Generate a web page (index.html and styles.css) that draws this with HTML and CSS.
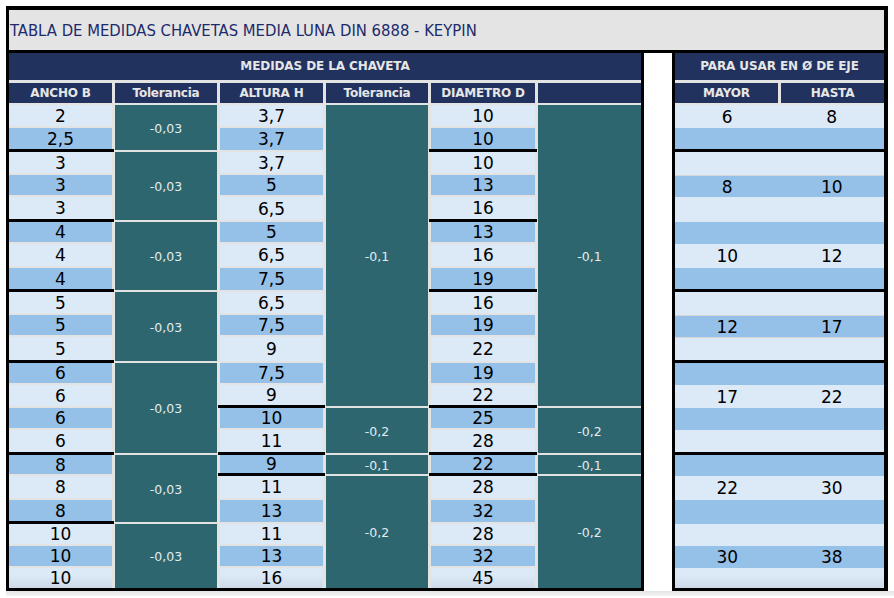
FILE: index.html
```html
<!DOCTYPE html>
<html lang="es">
<head>
<meta charset="utf-8">
<title>Tabla de medidas chavetas media luna DIN 6888</title>
<link rel="stylesheet" href="styles.css">
</head>
<body>
<div class="sheet">
  <div class="title">TABLA DE MEDIDAS CHAVETAS MEDIA LUNA DIN 6888 - KEYPIN</div>
  <div class="tables">
    <section class="tbl left">
      <div class="h1">MEDIDAS DE LA CHAVETA</div>
      <div class="h2 h2-left">
        <div>ANCHO B</div><div>Tolerancia</div><div>ALTURA H</div><div>Tolerancia</div><div>DIAMETRO D</div><div></div>
      </div>
      <div class="data">
        <div class="col">
          <div class="c l">2</div><div class="c b sep">2,5</div>
          <div class="c l">3</div><div class="c b">3</div><div class="c l sep">3</div>
          <div class="c b">4</div><div class="c l">4</div><div class="c b sep">4</div>
          <div class="c l">5</div><div class="c b">5</div><div class="c l sep">5</div>
          <div class="c b">6</div><div class="c l">6</div><div class="c b">6</div><div class="c l sep">6</div>
          <div class="c b">8</div><div class="c l">8</div><div class="c b sep">8</div>
          <div class="c l">10</div><div class="c b">10</div><div class="c l">10</div>
        </div>
        <div class="col">
          <div class="t s2">-0,03</div>
          <div class="t s3">-0,03</div>
          <div class="t s3">-0,03</div>
          <div class="t s3">-0,03</div>
          <div class="t s4">-0,03</div>
          <div class="t s3">-0,03</div>
          <div class="t s3">-0,03</div>
        </div>
        <div class="col">
          <div class="c l">3,7</div><div class="c b">3,7</div>
          <div class="c l">3,7</div><div class="c b">5</div><div class="c l">6,5</div>
          <div class="c b">5</div><div class="c l">6,5</div><div class="c b">7,5</div>
          <div class="c l">6,5</div><div class="c b">7,5</div><div class="c l">9</div>
          <div class="c b">7,5</div><div class="c l sep">9</div><div class="c b">10</div><div class="c l sep">11</div>
          <div class="c b sep">9</div><div class="c l">11</div><div class="c b">13</div>
          <div class="c l">11</div><div class="c b">13</div><div class="c l">16</div>
        </div>
        <div class="col">
          <div class="t s13">-0,1</div>
          <div class="t s2">-0,2</div>
          <div class="t">-0,1</div>
          <div class="t s5">-0,2</div>
        </div>
        <div class="col">
          <div class="c l">10</div><div class="c b sep">10</div>
          <div class="c l">10</div><div class="c b">13</div><div class="c l sep">16</div>
          <div class="c b">13</div><div class="c l">16</div><div class="c b sep">19</div>
          <div class="c l">16</div><div class="c b">19</div><div class="c l">22</div>
          <div class="c b">19</div><div class="c l sep">22</div><div class="c b">25</div><div class="c l sep">28</div>
          <div class="c b sep">22</div><div class="c l">28</div><div class="c b">32</div>
          <div class="c l">28</div><div class="c b">32</div><div class="c l">45</div>
        </div>
        <div class="col">
          <div class="t s13">-0,1</div>
          <div class="t s2">-0,2</div>
          <div class="t">-0,1</div>
          <div class="t s5">-0,2</div>
        </div>
      </div>
    </section>
    <section class="tbl right">
      <div class="h1">PARA USAR EN Ø DE EJE</div>
      <div class="h2 h2-right">
        <div>MAYOR</div><div>HASTA</div>
      </div>
      <div class="rdata">
        <div class="r l"><span>6</span><span>8</span></div>
        <div class="r b rsep"><span></span><span></span></div>
        <div class="r l"><span></span><span></span></div>
        <div class="r b gl"><span>8</span><span>10</span></div>
        <div class="r l"><span></span><span></span></div>
        <div class="r b"><span></span><span></span></div>
        <div class="r l"><span>10</span><span>12</span></div>
        <div class="r b rsep"><span></span><span></span></div>
        <div class="r l"><span></span><span></span></div>
        <div class="r b gl"><span>12</span><span>17</span></div>
        <div class="r l gl rsep"><span></span><span></span></div>
        <div class="r b"><span></span><span></span></div>
        <div class="r l"><span>17</span><span>22</span></div>
        <div class="r b"><span></span><span></span></div>
        <div class="r l rsep"><span></span><span></span></div>
        <div class="r b"><span></span><span></span></div>
        <div class="r l"><span>22</span><span>30</span></div>
        <div class="r b"><span></span><span></span></div>
        <div class="r l"><span></span><span></span></div>
        <div class="r b"><span>30</span><span>38</span></div>
        <div class="r l"><span></span><span></span></div>
      </div>
    </section>
  </div>
</div>
<div class="shade"></div>
</body>
</html>
```
FILE: styles.css
```css
html, body {
  margin: 0;
  padding: 0;
  background: #ffffff;
}

body {
  font-family: "DejaVu Sans", Verdana, sans-serif;
}

.sheet {
  margin: 6px 0 0 6px;
  width: 882px;
}

.title {
  height: 38px;
  padding: 2px 0 0 1px;
  line-height: 38px;
  background: #e4e4e4;
  border-style: solid;
  border-color: #000;
  border-width: 4px 4px 3px 3px;
  color: #1c2b6c;
  font-family: "DejaVu Sans Condensed", "DejaVu Sans", sans-serif;
  font-stretch: condensed;
  font-size: 16.5px;
  white-space: nowrap;
}

.tables {
  display: flex;
  align-items: flex-start;
  gap: 28px;
}

.tbl {
  background: #e3e3e3;
  border-style: solid;
  border-color: #000;
  border-width: 0 3px 3px 3px;
}

.left {
  width: 632px;
}

.right {
  width: 209px;
  border-right-width: 4px;
}

.h1 {
  height: 27px;
  line-height: 27px;
  margin-bottom: 3px;
  background: #22325f;
  color: #e6e6e6;
  font-weight: bold;
  font-size: 12px;
  letter-spacing: -0.1px;
  text-align: center;
  white-space: nowrap;
}

.h2 {
  display: grid;
  column-gap: 3px;
  height: 19px;
  margin-bottom: 3px;
}

.h2-left {
  grid-template-columns: 103px 102px 103px 102px 104px 103px;
}

.h2-right {
  grid-template-columns: 103px 103px;
}

.h2 > div {
  background: #22325f;
  color: #e6e6e6;
  font-weight: bold;
  font-size: 12px;
  letter-spacing: -0.2px;
  line-height: 19px;
  padding-top: 1px;
  box-sizing: border-box;
  text-align: center;
  white-space: nowrap;
}

/* spreadsheet rows: heights shared by both tables */
.data,
.rdata {
  display: grid;
  height: 483px;
  grid-template-rows: 23px 24px 23px 22px 25px 22px 24px 24px 23px 22px 26px 22px 23px 22px 25px 21px 24px 24px 22px 22px 20px;
}

.data {
  grid-template-columns: 103px 102px 103px 102px 104px 103px;
  column-gap: 3px;
  grid-auto-flow: column;
}

.col {
  display: contents;
}

.c,
.t {
  display: flex;
  align-items: center;
  justify-content: center;
  border-bottom: 2px solid transparent;
  background-clip: padding-box;
}

.c {
  font-size: 17px;
  color: #000;
}

.col > :last-child {
  border-bottom-width: 0;
}

.l { background-color: #dce9f6; }
.b { background-color: #95c1e8; }

.c.l:last-child,
.r.l:last-child {
  background-image: linear-gradient(to bottom, #dce9f6 35%, #cdd9e7);
}

.sep {
  position: relative;
  border-bottom-width: 3px;
}

.sep::after {
  content: "";
  position: absolute;
  left: -2px;
  right: -2px;
  bottom: -3px;
  height: 3px;
  background: #000;
}

.t {
  background-color: #2e6670;
  color: #e2ecee;
  font-size: 12.5px;
  padding-top: 1px;
}

.s2 { grid-row: span 2; }
.s3 { grid-row: span 3; }
.s4 { grid-row: span 4; }
.s5 { grid-row: span 5; }
.s13 { grid-row: span 13; }

.r {
  display: flex;
  align-items: center;
  box-sizing: border-box;
  font-size: 17px;
  color: #000;
}

.r span {
  flex: 1;
  text-align: center;
}

.rsep {
  border-bottom: 3px solid #000;
}

.r.gl {
  border-top: 1px solid #d6d6d6;
}

.shade {
  margin-left: 6px;
  height: 5px;
  background: linear-gradient(to bottom, #e4e4e4, #f4f4f4);
}
```
